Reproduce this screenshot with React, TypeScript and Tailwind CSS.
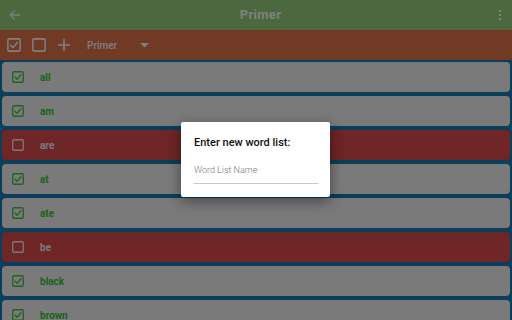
import React from "react";

type Word = { text: string; on: boolean };

const words: Word[] = [
  { text: "all", on: true },
  { text: "am", on: true },
  { text: "are", on: false },
  { text: "at", on: true },
  { text: "ate", on: true },
  { text: "be", on: false },
  { text: "black", on: true },
  { text: "brown", on: true },
];

function CheckBox({ on, color, size = 12 }: { on: boolean; color: string; size?: number }) {
  return (
    <svg width={size} height={size} viewBox="0 0 12 12" fill="none">
      <rect x="0.75" y="0.75" width="10.5" height="10.5" rx="1" stroke={color} strokeWidth="1.3" />
      {on && <path d="M3 6.2 L5.1 8.2 L9 3.8" stroke={color} strokeWidth="1.3" strokeLinecap="round" strokeLinejoin="round" />}
    </svg>
  );
}

export default function App() {
  return (
    <div className="relative w-[512px] h-[320px] overflow-hidden bg-[#147cb4]" style={{ fontFamily: "Roboto, 'Liberation Sans', sans-serif" }}>
      {/* App bar */}
      <header className="h-[30px] bg-[#96d07c] flex items-center justify-between px-[8px] text-white">
        <svg width="14" height="14" viewBox="0 0 24 24" fill="none" stroke="white" strokeWidth="2.2" strokeLinecap="round" strokeLinejoin="round">
          <path d="M20 12H5M11 5l-7 7 7 7" />
        </svg>
        <h1 className="text-[13px] font-bold tracking-wide">Primer</h1>
        <div className="flex flex-col gap-[2px] pr-[3px]">
          <span className="w-[2px] h-[2px] bg-white" />
          <span className="w-[2px] h-[2px] bg-white" />
          <span className="w-[2px] h-[2px] bg-white" />
        </div>
      </header>

      {/* Toolbar */}
      <div className="h-[30px] bg-[#e0744a] flex items-center pl-[7px] text-white">
        <CheckBox on color="white" size={14} />
        <span className="ml-[11px]"><CheckBox on={false} color="white" size={14} /></span>
        <svg className="ml-[11px]" width="14" height="14" viewBox="0 0 14 14" stroke="white" strokeWidth="1.6">
          <path d="M7 1v12M1 7h12" />
        </svg>
        <span className="ml-[16px] text-[10px] font-medium">Primer</span>
        <svg className="ml-[23px]" width="9" height="5" viewBox="0 0 9 5" fill="white">
          <path d="M0 0h9L4.5 4.5z" />
        </svg>
      </div>

      {/* Word list */}
      <div className="flex flex-col gap-[4px] p-[2px]">
        {words.map((w) => (
          <div
            key={w.text}
            className={`h-[30px] shrink-0 rounded-[4px] flex items-center pl-[10px] ${w.on ? "bg-[#f4f4f4]" : "bg-[#dc4c4c]"}`}
          >
            <CheckBox on={w.on} color={w.on ? "#3cc83c" : "#f4f4f4"} />
            <span className={`ml-[16px] text-[10px] font-bold ${w.on ? "text-[#36c436]" : "text-[#f4f4f4]"}`}>{w.text}</span>
          </div>
        ))}
      </div>

      {/* Scrim */}
      <div className="absolute inset-0 bg-black/50" />

      {/* Dialog */}
      <div className="absolute left-[181px] top-[122px] w-[149px] h-[75px] bg-white rounded-[2px] shadow-[0_4px_14px_rgba(0,0,0,0.45)] px-[13px] pt-[14px]">
        <p className="text-[11px] font-medium text-[#111] leading-[14px]">Enter new word list:</p>
        <div className="mt-[14px] border-b border-[#c8c8c8] pb-[7px] w-[124px]">
          <p className="text-[9px] font-light leading-[12px] text-[#777]">Word List Name</p>
        </div>
      </div>
    </div>
  );
}
